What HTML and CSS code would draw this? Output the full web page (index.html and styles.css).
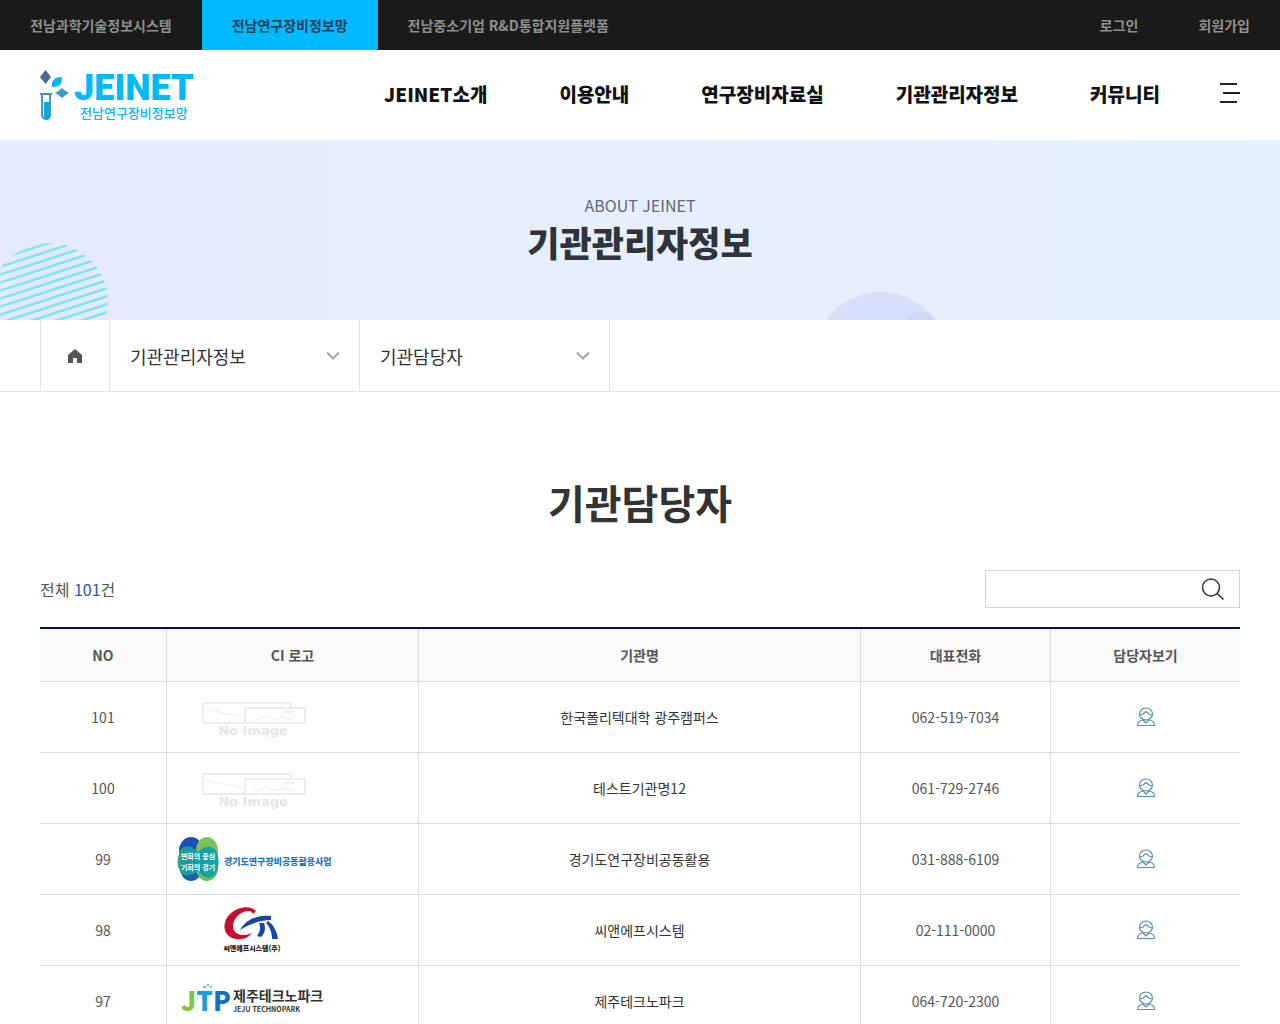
FILE: index.html
```html
<!DOCTYPE html>
<html lang="ko">
<head>
    <meta charset="UTF-8">
    <meta name="viewport" content="width=device-width, initial-scale=1">
    <title>기관담당자 - JEINET</title>
    <link rel="stylesheet" href="styles.css">
</head>
<body>

<!-- shared icons -->
<svg class="defs" width="0" height="0" aria-hidden="true">
    <symbol id="person" viewBox="0 0 20 20">
        <g fill="none" stroke="#5b93a8" stroke-width="1.2" stroke-linejoin="round">
            <ellipse cx="10" cy="7" rx="6.500" ry="6"/>
            <path d="M4 8 L7 7 L10 4.500 L13 7 L16 8"/>
            <path d="M1.500 18.500 C1.500 15 4 13.500 7 13 L10 16 L13 13 C16 13.500 18.500 15 18.500 18.500 Z"/>
        </g>
    </symbol>
    <symbol id="noimage" viewBox="0 0 150 50">
        <g fill="none" stroke="#ececec" stroke-width="2">
            <path d="M26 31 V11 H114 V15 M26 31 H68"/>
            <path d="M68 16 H128 V31 H68 Z"/>
            <path d="M28 17 L66 25 M76 29 L90 24 L98 28 L106 25 L116 28" stroke-width="1"/>
            <ellipse cx="112" cy="20" rx="5" ry="1" stroke-width="1"/>
        </g>
    </symbol>
    <symbol id="chevron" viewBox="0 0 14 10">
        <path d="M1 1.500 L7 7.500 L13 1.500" fill="none" stroke="#a5a5a5" stroke-width="2"/>
    </symbol>
</svg>

<div class="topbar">
    <ul class="sites">
        <li><a href="#">전남과학기술정보시스템</a></li>
        <li><a href="#" class="on">전남연구장비정보망</a></li>
        <li><a href="#">전남중소기업 R&amp;D통합지원플랫폼</a></li>
    </ul>
    <ul class="member">
        <li><a href="#">로그인</a></li>
        <li><a href="#">회원가입</a></li>
    </ul>
</div>

<header class="header">
    <a href="#" class="logo">
        <svg width="30" height="52" viewBox="0 0 30 52" aria-hidden="true">
            <path d="M5.500 0 L11 7 L5.500 14 L0 7 Z" fill="#48689a"/>
            <path d="M12 17 C11 10 15 7 22 7 C22 14 20 17 12 17 Z" fill="#00b5f5"/>
            <path d="M15 23 Q19 21 22 18 Q25 21 29 23 Q25 25 22 28 Q19 25 15 23 Z" fill="#3a9fc4"/>
            <path d="M0 24 H12" stroke="#3f8fb5" stroke-width="2"/>
            <path d="M2 24 V45 a4 4 0 0 0 8 0 V24" fill="none" stroke="#3f9fc8" stroke-width="2"/>
            <path d="M4 32 H10 V45 a3 4 0 0 1 -6 2 Z" fill="#13a5dd"/>
        </svg>
        <span class="logo-text">
            <strong>JEINET</strong>
            <span>전남연구장비정보망</span>
        </span>
    </a>
    <nav class="gnb">
        <a href="#">JEINET소개</a>
        <a href="#">이용안내</a>
        <a href="#">연구장비자료실</a>
        <a href="#">기관관리자정보</a>
        <a href="#">커뮤니티</a>
        <button type="button" class="allmenu" aria-label="전체메뉴">
            <svg width="20" height="20" viewBox="0 0 20 20"><path d="M0 1 H17 M3 10 H20 M0 19 H17" stroke="#222" stroke-width="2"/></svg>
        </button>
    </nav>
</header>

<div class="visual">
    <svg class="deco-line" width="108" height="78" viewBox="0 0 108 78" aria-hidden="true">
        <defs>
            <clipPath id="round"><circle cx="49" cy="60" r="59"/></clipPath>
        </defs>
        <path clip-path="url(#round)" fill="none" stroke="#7fe5f8" stroke-width="2.5" d="M-10 12 l130 -42 M-10 20 l130 -42 M-10 28 l130 -42 M-10 36 l130 -42 M-10 44 l130 -42 M-10 52 l130 -42 M-10 60 l130 -42 M-10 68 l130 -42 M-10 76 l130 -42 M-10 84 l130 -42 M-10 92 l130 -42 M-10 100 l130 -42 M-10 108 l130 -42 M-10 116 l130 -42"/>
    </svg>
    <svg class="deco-circle" width="120" height="28" viewBox="0 0 120 28" aria-hidden="true">
        <defs>
            <clipPath id="big"><circle cx="62" cy="68" r="68"/></clipPath>
        </defs>
        <circle cx="62" cy="68" r="68" fill="#d7e0fb"/>
        <circle cx="102" cy="38" r="18" fill="#cdd7fc" clip-path="url(#big)"/>
    </svg>
    <p>ABOUT JEINET</p>
    <h2>기관관리자정보</h2>
</div>

<div class="location">
    <div class="inner">
        <a href="#" class="home" aria-label="홈">
            <svg width="16" height="14" viewBox="0 0 16 14"><path d="M8 0 L15 6 V14 H10 V9 H6 V14 H1 V6 Z" fill="#555"/></svg>
        </a>
        <div class="depth">
            <select aria-label="1차 메뉴"><option>기관관리자정보</option></select>
            <svg width="14" height="10"><use href="#chevron"/></svg>
        </div>
        <div class="depth">
            <select aria-label="2차 메뉴"><option>기관담당자</option></select>
            <svg width="14" height="10"><use href="#chevron"/></svg>
        </div>
    </div>
</div>

<main class="content">
    <h3>기관담당자</h3>
    <div class="list-top">
        <p>전체 <em>101</em>건</p>
        <form class="search">
            <input type="text" aria-label="검색어">
            <button type="button" aria-label="검색">
                <svg width="24" height="22" viewBox="0 0 24 22"><g fill="none" stroke="#333" stroke-width="1.500"><circle cx="10" cy="9.500" r="8.500"/><path d="M16 15.500 L22.500 21.500"/></g></svg>
            </button>
        </form>
    </div>
    <table class="list">
        <colgroup>
            <col class="c-no"><col class="c-logo"><col class="c-name"><col class="c-tel"><col class="c-view">
        </colgroup>
        <thead>
            <tr><th>NO</th><th>CI 로고</th><th>기관명</th><th>대표전화</th><th>담당자보기</th></tr>
        </thead>
        <tbody>
            <tr>
                <td>101</td>
                <td class="ci"><svg width="150" height="50"><use href="#noimage"/><text x="76" y="43" class="noimg">No Image</text></svg></td>
                <td class="name">한국폴리텍대학 광주캠퍼스</td>
                <td>062-519-7034</td>
                <td><a href="#" aria-label="담당자보기"><svg width="20" height="20"><use href="#person"/></svg></a></td>
            </tr>
            <tr>
                <td>100</td>
                <td class="ci"><svg width="150" height="50"><use href="#noimage"/><text x="76" y="43" class="noimg">No Image</text></svg></td>
                <td class="name">테스트기관명12</td>
                <td>061-729-2746</td>
                <td><a href="#" aria-label="담당자보기"><svg width="20" height="20"><use href="#person"/></svg></a></td>
            </tr>
            <tr>
                <td>99</td>
                <td class="ci">
                    <svg width="156" height="50">
                        <defs>
                            <linearGradient id="gg" x1="0" y1="0" x2="1" y2="0"><stop offset="0" stop-color="#3aa66a"/><stop offset="0.2" stop-color="#1898a8"/><stop offset="1" stop-color="#12a7a5"/></linearGradient>
                        </defs>
                        <ellipse cx="14" cy="17" rx="12" ry="14" fill="#1c50ae"/>
                        <ellipse cx="30" cy="17" rx="11" ry="14" fill="#7cc257"/>
                        <ellipse cx="14" cy="34" rx="11" ry="13" fill="#1b5fae"/>
                        <ellipse cx="30" cy="34" rx="11" ry="13" fill="#6fbd57"/>
                        <path d="M2 20 C4 10 14 10 21 18 C29 9 40 12 41 22 C43 32 40 42 33 44 C28 44 24 40 21 37 C14 42 6 44 3 37 C0 32 0 26 2 20 Z" fill="url(#gg)"/>
                        <text x="21" y="25" class="gg-mark">변화의 중심</text>
                        <text x="21" y="36" class="gg-mark">기회의 경기</text>
                        <text x="47" y="31" class="gg-name">경기도연구장비공동활용사업</text>
                    </svg>
                </td>
                <td class="name">경기도연구장비공동활용</td>
                <td>031-888-6109</td>
                <td><a href="#" aria-label="담당자보기"><svg width="20" height="20"><use href="#person"/></svg></a></td>
            </tr>
            <tr>
                <td>98</td>
                <td class="ci">
                    <svg width="150" height="50">
                        <path d="M79 6 C74 0 61 1 53 9 C44 18 46 32 59 34 C66 35 71 33 75 28 C66 32 58 30 56 23 C55 14 63 6 72 6 C75 6 75 8 76 9 Z" fill="#c8102e"/>
                        <path d="M63 25 C70 13 82 10 94 11 L94 15 C85 15 75 18 63 25 Z" fill="#17479e"/>
                        <path d="M82 18 H87 C89 23 88 28 84 32 L80 31 C83 27 84 23 82 18 Z M91 16 C97 20 100 27 101 34 H95 C95 28 93 22 89 18 Z" fill="#17479e"/>
                        <text x="75" y="46" class="cn-name">씨앤에프시스템(주)</text>
                    </svg>
                </td>
                <td class="name">씨앤에프시스템</td>
                <td>02-111-0000</td>
                <td><a href="#" aria-label="담당자보기"><svg width="20" height="20"><use href="#person"/></svg></a></td>
            </tr>
            <tr>
                <td>97</td>
                <td class="ci">
                    <svg width="156" height="50">
                        <text x="4" y="35" class="jtp"><tspan fill="#84c341">J</tspan><tspan fill="#1c9fd8">T</tspan><tspan fill="#1470c0">P</tspan></text>
                        <path d="M26 10 h3 v2 h-3 Z M30 8 h2 v2 h-2 Z M33 10 h2 v2 h-2 Z" fill="#5cc5ee"/>
                        <text x="56" y="25" class="jtp-name">제주테크노파크</text>
                        <text x="56" y="36" class="jtp-en">JEJU TECHNOPARK</text>
                    </svg>
                </td>
                <td class="name">제주테크노파크</td>
                <td>064-720-2300</td>
                <td><a href="#" aria-label="담당자보기"><svg width="20" height="20"><use href="#person"/></svg></a></td>
            </tr>
        </tbody>
    </table>
</main>

</body>
</html>
```
FILE: styles.css
```css
* {
    box-sizing: border-box;
    margin: 0;
    padding: 0;
}
body {
    font-family: "Noto Sans CJK KR", sans-serif;
    font-size: 14px;
    color: #555;
    background: #fff;
}
a {
    color: inherit;
    text-decoration: none;
}
ul {
    list-style: none;
}
svg {
    display: block;
}
button {
    background: none;
    border: 0;
    cursor: pointer;
}
.defs {
    position: absolute;
}

/* top bar */
.topbar {
    display: flex;
    justify-content: space-between;
    background: #1a1a1a;
}
.topbar ul {
    display: flex;
}
.topbar a {
    display: block;
    padding: 0 30px;
    line-height: 50px;
    font-weight: 700;
    color: #8f8f8f;
}
.topbar a.on {
    background: #00b9ff;
    color: #1a3f55;
}

/* header */
.header {
    display: flex;
    justify-content: space-between;
    align-items: center;
    height: 90px;
    padding: 0 40px;
}
.logo {
    display: flex;
    gap: 4px;
    padding-top: 2px;
    color: #00b9ff;
}
.logo-text {
    display: flex;
    flex-direction: column;
    align-items: center;
}
.logo-text strong {
    font-family: Roboto, sans-serif;
    font-size: 36px;
    font-weight: 900;
    line-height: 36px;
}
.logo-text span {
    font-size: 13px;
    font-weight: 500;
    line-height: 14px;
}
.gnb {
    display: flex;
    align-items: center;
    gap: 72px;
    padding-bottom: 4px;
}
.gnb a {
    font-size: 19px;
    font-weight: 900;
    color: #111;
}
.allmenu {
    margin-left: -12px;
}

/* sub visual */
.visual {
    position: relative;
    height: 180px;
    padding-top: 53px;
    text-align: center;
    background: linear-gradient(90deg, #e5eafc, #e7effc 50%, #e6f1fc 80%, #e4f2fb);
}
.visual p {
    font-size: 16px;
    line-height: 24px;
    color: #606875;
}
.visual h2 {
    font-size: 35px;
    font-weight: 900;
    line-height: 50px;
    color: #2f343c;
}
.deco-line {
    position: absolute;
    left: 0;
    bottom: 0;
}
.deco-circle {
    position: absolute;
    left: 64%;
    bottom: 0;
}

/* location */
.location {
    padding: 0 40px;
    border-bottom: 1px solid #e5e5e5;
}
.location .inner {
    display: flex;
    height: 71px;
    border-left: 1px solid #e5e5e5;
}
.home {
    display: flex;
    align-items: center;
    justify-content: center;
    width: 69px;
    border-right: 1px solid #e5e5e5;
}
.depth {
    position: relative;
    width: 250px;
    border-right: 1px solid #e5e5e5;
}
.depth select {
    appearance: none;
    width: 100%;
    height: 100%;
    padding: 0 20px;
    border: 0;
    background: none;
    font-family: inherit;
    font-size: 18px;
    color: #333;
}
.depth svg {
    position: absolute;
    right: 19px;
    top: 31px;
    pointer-events: none;
}

/* content */
.content {
    padding: 80px 40px;
}
.content h3 {
    font-size: 40px;
    font-weight: 700;
    line-height: 60px;
    text-align: center;
    color: #333;
}
.list-top {
    display: flex;
    justify-content: space-between;
    align-items: center;
    margin: 38px 0 19px;
}
.list-top p {
    font-size: 16px;
}
.list-top em {
    font-style: normal;
    color: #2f55b0;
}
.search {
    display: flex;
    width: 255px;
    height: 38px;
    border: 1px solid #d5d5d5;
}
.search input {
    flex: 1;
    min-width: 0;
    padding: 0 10px;
    border: 0;
    font-size: 14px;
}
.search button {
    padding: 0 14px;
}
.list {
    width: 100%;
    table-layout: fixed;
    border-collapse: separate;
    border-spacing: 0;
    border-top: 2px solid #00144b;
    text-align: center;
}
.c-no {
    width: 127px;
}
.c-logo {
    width: 252px;
}
.c-tel {
    width: 190px;
}
.c-view {
    width: 189px;
}
.list th, .list td {
    border-bottom: 1px solid #ddd;
    border-right: 1px solid #ddd;
}
.list th:last-child, .list td:last-child {
    border-right: 0;
}
.list th {
    height: 53px;
    background: #f9f9f9;
    font-weight: 700;
}
.list td {
    height: 71px;
}
.list td.ci {
    padding: 0 10px;
}
.list td.name {
    color: #333;
}
.list td a {
    display: block;
    width: 20px;
    margin: 0 auto;
}

/* organisation logos */
.noimg {
    font: bold 13px "DejaVu Sans", sans-serif;
    text-anchor: middle;
    fill: #e6e6e6;
}
.gg-mark {
    font-size: 7px;
    font-weight: 700;
    text-anchor: middle;
    fill: #fff;
}
.gg-name {
    font-size: 9px;
    font-weight: 900;
    fill: #1d78bf;
}
.cn-name {
    font-size: 7px;
    font-weight: 900;
    text-anchor: middle;
    fill: #222;
}
.jtp {
    font-size: 26px;
    font-weight: 900;
}
.jtp-name {
    font-size: 14px;
    font-weight: 700;
    fill: #333;
}
.jtp-en {
    font-size: 7px;
    font-weight: 700;
    fill: #333;
}
```
